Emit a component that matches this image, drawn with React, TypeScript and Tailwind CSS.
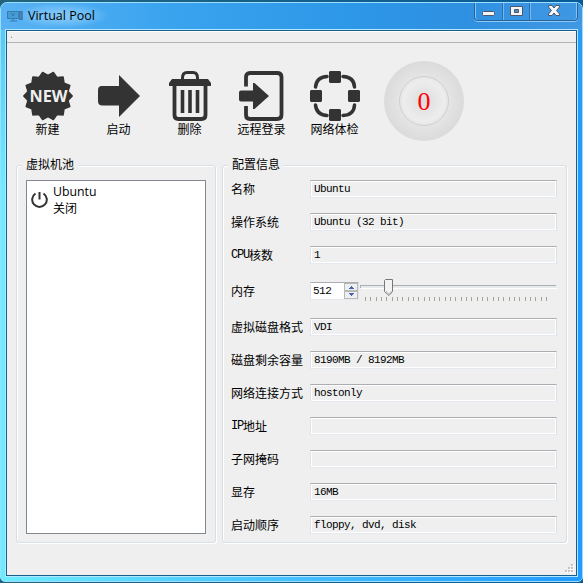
import type { ReactNode } from "react";

const CJK = "font-['Noto_Sans_CJK_SC',sans-serif]";
const MONO = "font-['Liberation_Mono','Noto_Sans_CJK_SC',monospace]";

function starPoints(n: number, outer: number, inner: number) {
  const pts: string[] = [];
  for (let i = 0; i < n * 2; i++) {
    const r = i % 2 === 0 ? inner : outer;
    const a = (Math.PI * i) / n - Math.PI / 2;
    pts.push(`${(25 + r * Math.cos(a)).toFixed(2)},${(25 + r * Math.sin(a)).toFixed(2)}`);
  }
  return pts.join(" ");
}

function NewIcon() {
  return (
    <svg width="50" height="50" viewBox="0 0 50 50">
      <polygon points={starPoints(14, 24.2, 20.5)} fill="#333" stroke="#333" strokeWidth="1.5" strokeLinejoin="round" />
      <text x="25.500" y="31" textAnchor="middle" textLength="38" lengthAdjust="spacingAndGlyphs" fontFamily="Open Sans, sans-serif" fontWeight="700" fontSize="16.5" fill="#efefef">NEW</text>
    </svg>
  );
}

function StartIcon() {
  return (
    <svg width="50" height="50" viewBox="0 0 50 50">
      <path d="M7.500 15H25V4L46 25 25 46V34.500H8.500C5.500 34.500 4 33 4 30V19C4 16.500 5.500 15 7.500 15Z" fill="#333" />
    </svg>
  );
}

function TrashIcon() {
  return (
    <svg width="50" height="50" viewBox="0 0 50 50" fill="none" stroke="#333">
      <path d="M17.500 9V7Q17.500 1.500 22 1.500H28Q32.500 1.500 32.500 7V9" strokeWidth="3" />
      <path d="M7 8H43L46 12V15H4V12Z" fill="#333" stroke="none" />
      <path d="M9.500 14V44Q9.500 48 13.500 48H36.500Q40.500 48 40.500 44V14" strokeWidth="3.800" />
      <path d="M17.500 19V42M25 19V42M32.500 19V42" strokeWidth="3.600" />
    </svg>
  );
}

function RemoteIcon() {
  return (
    <svg width="50" height="50" viewBox="0 0 50 50" fill="none" stroke="#333">
      <path d="M9 15.500V6Q9 2 13 2H40Q44.500 2 44.500 6V44Q44.500 48 40 48H13Q9 48 9 44V35" strokeWidth="3.800" />
      <path d="M4 19.500H16V12L17.500 12 32 25 17.500 38H16V30.500H4Q2 30.500 2 28.500V21.500Q2 19.500 4 19.500Z" fill="#333" stroke="none" />
    </svg>
  );
}

function NetworkIcon() {
  return (
    <svg width="50" height="50" viewBox="0 0 50 50" fill="none" stroke="#333">
      <path d="M5.500 16Q6.500 6 17 5.500M33 5.500Q44 6 44.500 16M5.500 34Q6.500 44 17 44.500M33 44.500Q44 44 44.500 34" strokeWidth="3.500" strokeLinecap="round" />
      <path d="M20 0H30L31 1V11L30 12H20L19 11V1ZM20 38H30L31 39V49L30 50H20L19 49V39ZM1 19H11L12 20V30L11 31H1L0 30V20ZM39 19H49L50 20V30L49 31H39L38 30V20Z" fill="#333" stroke="none" />
    </svg>
  );
}

function Tool({ label, wide, children }: { label: string; wide?: boolean; children: ReactNode }) {
  return (
    <div className={`flex flex-col items-center ${wide ? "w-[73px]" : "w-[71px]"}`}>
      {children}
      <span className={`${CJK} h-[15px] text-[12px] leading-[15px] whitespace-nowrap text-black`}>{label}</span>
    </div>
  );
}

function Group({ title, className, children }: { title: string; className: string; children: ReactNode }) {
  return (
    <section className={`relative rounded-[3px] border border-[#d5dfe5] shadow-[inset_1px_1px_0_#fff,1px_1px_0_#fff] ${className}`}>
      <h2 className={`absolute -top-[11px] left-[5px] bg-[#efefef] px-[4px] text-[12px] leading-[18px] font-normal ${CJK}`}>{title}</h2>
      {children}
    </section>
  );
}

function Label({ text }: { text: string }) {
  const latin = text.match(/^[A-Z]+/)?.[0] ?? "";
  return (
    <span className={`flex w-[79px] shrink-0 items-center text-[12px] leading-[18px] whitespace-nowrap ${CJK}`}>
      {latin && <span className={`text-[12px] tracking-[-1.2px] ${MONO}`}>{latin}</span>}
      {text.slice(latin.length)}
    </span>
  );
}

function Field({ label, value }: { label: string; value: string }) {
  return (
    <div className="flex h-[18px]">
      <Label text={label} />
      <div className={`h-[18px] w-[247px] border border-t-[#abadb3] border-r-[#dbdfe6] border-b-[#e3e9ef] border-l-[#e2e3ea] pl-[3px] text-[11px] leading-[16px] tracking-[-0.6px] whitespace-pre shadow-[inset_0_0_0_1px_#fff] ${MONO}`}>
        {value}
      </div>
    </div>
  );
}

function Memory() {
  return (
    <div className="mt-[3px] mb-[3px] flex h-[18px]">
      <Label text="内存" />
      <div className="flex h-[18px] w-[49px] justify-between border border-t-[#abadb3] border-r-[#e2e3ea] border-b-[#e3e9ef] border-l-[#e2e3ea] bg-white pl-[2px]">
        <span className={`text-[11px] leading-[17px] tracking-[-0.5px] ${MONO}`}>512</span>
        <svg width="14" height="16" viewBox="0 0 14 16" shapeRendering="crispEdges">
          <path d="M.5 .5H13.500V7.500H.5ZM.5 8.500H13.500V15.500H.5Z" fill="#efefef" stroke="#b9b9b9" />
          <path d="M4 6L7 3 10 6ZM4 10H10L7 13Z" fill="#4663b4" />
        </svg>
      </div>
      <svg className="-mt-[4px] ml-px" width="197" height="24" viewBox="0 0 197 24" shapeRendering="crispEdges">
        <path d="M0 7.500H196" stroke="#abadb3" />
        <path d="M0.500 7V10" stroke="#abadb3" />
        <path d="M1 9H196" stroke="#e7eaea" strokeWidth="2" />
        <path d="M1 10.500H197" stroke="#fff" />
        {Array.from({ length: 35 }, (_, i) => (
          <rect key={i} x={Math.round(5 + i * 5.32)} y="19" width="1" height="4" fill={i % 3 === 0 ? "#a5a58a" : "#a3a39b"} />
        ))}
        <path d="M25.500 1.500H32.500V13.500L29 17.500 24.500 13.500V2.500Z" fill="#f3f3f3" stroke="#777" shapeRendering="auto" />
        <path d="M26 13L29 16 31.500 13" fill="none" stroke="#bfc8c8" shapeRendering="auto" />
      </svg>
    </div>
  );
}

export default function App() {
  return (
    <div className="h-[583px] w-[583px] overflow-hidden bg-[linear-gradient(90deg,#23647c,#075c98)] pt-[2px] text-black">
      <main className="flex h-[580px] w-[583px] flex-col rounded-t-[7px] rounded-b-[5px] border border-[#9adfff] bg-[linear-gradient(180deg,#3b9ce880_0px,#2191e700_180px),linear-gradient(90deg,#6cecff,#42bcff_55%,#229aff)]">
        <header className="flex h-[27px] shrink-0 justify-between rounded-t-[6px] bg-[linear-gradient(90deg,#59b2f3,#3ba4ef_28%,#2d97e8_60%,#2f90e1_80%,#4198e3)]">
          <div className="flex h-[25px] items-center pl-[6px]">
            <svg width="17" height="12" viewBox="0 0 17 12">
              <path d="M.5 1.500H11.500V8.500H.5Z" fill="#459bd6" stroke="#347dad" />
              <path d="M3 11H10M6 9V11M4 3L7 6M8 3L5 6" stroke="#347dad" />
              <path d="M12 1H16V10H12Z" fill="#3a74ac" />
            </svg>
            <h1 className="-ml-[9px] bg-[radial-gradient(closest-side,#b4e3ff90,#9bd7ff60_60%,#9bd7ff00)] pr-[14px] pl-[13px] font-['Open_Sans',sans-serif] text-[12.5px] leading-[25px] font-normal whitespace-nowrap">Virtual Pool</h1>
          </div>
          <div className="mr-[4px] flex h-[18px] rounded-b-[4px] border border-t-0 border-[#26649e] shadow-[0_1px_0_#8dcaf5,inset_1px_0_0_#83c4f3,inset_-1px_0_0_#83c4f3]">
            <div className="flex w-[28px] items-center justify-center border-r border-[#2b6fae] pt-[2px]">
              <svg width="13" height="6"><rect x=".5" y="1.500" width="12" height="4" rx="1" fill="#f4f4f4" stroke="#4d5870" /></svg>
            </div>
            <div className="flex w-[27px] items-center justify-center border-r border-[#2b6fae] pb-[2px] shadow-[inset_1px_0_0_#73b9ed]">
              <svg width="13" height="10"><path d="M.5 .5H12.500V9.500H.5Z" fill="#f4f4f4" stroke="#4d5870" /><path d="M4.500 3.500H8.500V6.500H4.500Z" fill="#438ed0" stroke="#4d5870" /></svg>
            </div>
            <div className="flex w-[47px] items-center justify-center pb-[2px] shadow-[inset_1px_0_0_#73b9ed]">
              <svg width="12" height="11"><path d="M.5 .5H4L6 3 8 .5H11.500V2L8.500 5.500 11.500 9V10.500H8L6 8 4 10.500H.5V9L3.500 5.500 .5 2Z" fill="#f7f7f7" stroke="#4d5870" /></svg>
            </div>
          </div>
        </header>
        <div className="ml-[5px] flex h-[546px] w-[571px] shrink-0 flex-col border border-[#185e89] bg-[#efefef] shadow-[0_0_0_1px_#b3e7ff]">
          <div className="h-[12px] shrink-0 border-t border-b border-t-white border-b-[#b4b4b4] pt-[4px] pl-[4px]">
            <div className="h-[2px] w-[2px] border-r border-b border-r-white border-b-[#aaa] bg-[#bbb]" />
          </div>
          <nav className="flex h-[122px] shrink-0 pt-[18px] pl-[5px]">
            <div className="flex pt-[10px]">
              <Tool label="新建"><NewIcon /></Tool>
              <Tool label="启动"><StartIcon /></Tool>
              <Tool label="删除"><TrashIcon /></Tool>
              <Tool label="远程登录" wide><RemoteIcon /></Tool>
              <Tool label="网络体检" wide><NetworkIcon /></Tool>
            </div>
            <div className="ml-[13px] flex h-[80px] w-[80px] items-center justify-center rounded-full bg-[radial-gradient(circle,#e5e5e5_42%,#dadada_72%)]">
              <div className="flex h-[50px] w-[50px] items-center justify-center rounded-full border border-[#cfcfcf] bg-[radial-gradient(circle_closest-side,#dcdcdc,#ededed_85%,#e6e6e6)] pt-[2px] font-['Liberation_Serif',serif] text-[26px] leading-none text-[#ff0000]">0</div>
            </div>
          </nav>
          <div className="flex gap-[6px] pl-[9px]">
            <Group title="虚拟机池" className="h-[378px] w-[200px] pt-[14px] pl-[9px]">
              <div className="flex h-[354px] w-[180px] items-start border border-[#828790] bg-white pt-[3px] pl-[4px]">
                <svg className="mt-[7px]" width="17" height="18" viewBox="0 0 17 18" fill="none" stroke="#333" strokeWidth="2">
                  <path d="M4.500 2.500A7.300 7.300 0 1 0 12.500 2.500M8.500 1V8.500" />
                </svg>
                <div className="ml-[5px] text-[12px]">
                  <div className="font-['Open_Sans',sans-serif] text-[12.3px] leading-[16px]">Ubuntu</div>
                  <div className={`leading-[16px] ${CJK}`}>关闭</div>
                </div>
              </div>
            </Group>
            <Group title="配置信息" className="flex h-[378px] w-[345px] flex-col gap-[15px] pt-[14px] pl-[8px]">
              <Field label="名称" value="Ubuntu" />
              <Field label="操作系统" value="Ubuntu (32 bit)" />
              <Field label="CPU核数" value="1" />
              <Memory />
              <Field label="虚拟磁盘格式" value="VDI" />
              <Field label="磁盘剩余容量" value="8190MB / 8192MB" />
              <Field label="网络连接方式" value="hostonly" />
              <Field label="IP地址" value="" />
              <Field label="子网掩码" value="" />
              <Field label="显存" value="16MB" />
              <Field label="启动顺序" value="floppy, dvd, disk" />
            </Group>
          </div>
          <footer className="mt-auto flex justify-end pr-[2px] pb-[2px]">
            <svg width="9" height="9" shapeRendering="crispEdges">
              {[[6, 0], [3, 3], [6, 3], [0, 6], [3, 6], [6, 6]].map(([x, y]) => (
                <g key={`${x}-${y}`}>
                  <rect x={x + 1} y={y + 1} width="2" height="2" fill="#fff" />
                  <rect x={x} y={y} width="2" height="2" fill="#c3c3c3" />
                </g>
              ))}
            </svg>
          </footer>
        </div>
      </main>
    </div>
  );
}
